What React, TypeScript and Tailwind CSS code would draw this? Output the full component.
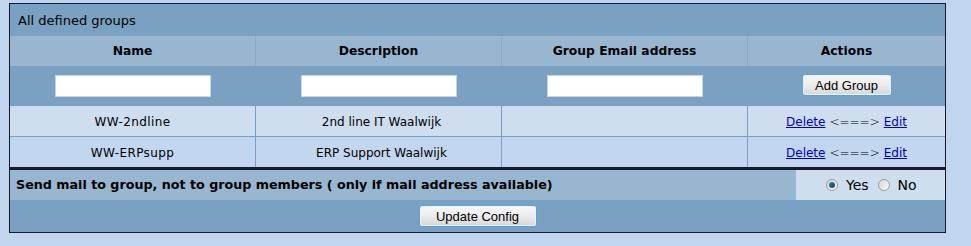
import React from "react";

const font = { fontFamily: '"DejaVu Sans", Verdana, sans-serif' };

function Btn({ label, w }: { label: string; w: string }) {
  return (
    <button
      className={`${w} h-[22px] rounded-[3px] border border-[#5fa0d8] bg-gradient-to-b from-[#f7f7f7] via-[#ececec] to-[#d6d6d6] text-[13px] text-black shadow-[inset_0_0_0_1px_#e8f3fc] leading-none`}
      style={{ fontFamily: '"Liberation Sans", Arial, sans-serif' }}
    >
      {label}
    </button>
  );
}

function Radio({ checked }: { checked?: boolean }) {
  return (
    <span className="inline-flex w-[12px] h-[12px] rounded-full border border-[#9a9a9a] bg-gradient-to-br from-[#d4d4d4] to-[#fbfbfb] items-center justify-center">
      {checked && (
        <span className="w-[6px] h-[6px] rounded-full bg-gradient-to-br from-[#3a86a8] to-[#0d3c55]" />
      )}
    </span>
  );
}

export default function App() {
  const rows = [
    { name: "WW-2ndline", desc: "2nd line IT Waalwijk", bg: "bg-[#cfdeee]" },
    { name: "WW-ERPsupp", desc: "ERP Support Waalwijk", bg: "bg-[#c3d6ef]" },
  ];
  const cols = "grid grid-cols-[245px_245px_245px_197px] gap-x-px";
  return (
    <div className="w-[971px] h-[246px] bg-[#c1d5ef] pt-[3px] pl-[9px] text-black text-[12px]" style={font}>
      <div className="w-[937px] border border-[#161a2c]">
        <div className="h-[32px] bg-[#7aa0c2] flex items-center pl-[8px] pt-[1px] text-[13px]">All defined groups</div>
        <div className={`${cols} h-[30px] bg-[#8aa9c6]`}>
          {["Name", "Description", "Group Email address", "Actions"].map((h) => (
            <div key={h} className="bg-[#98b6d0] flex items-center justify-center font-bold text-[12.3px]">
              {h}
            </div>
          ))}
        </div>
        <div className={`${cols} h-[39px] bg-[#7aa0c2]`}>
          {[0, 1, 2].map((i) => (
            <div key={i} className="flex items-center justify-center">
              <input className="w-[156px] h-[22px] bg-white border border-[#c7d4e2] outline-none" />
            </div>
          ))}
          <div className="flex items-center justify-center pb-[1px]">
            <Btn label="Add Group" w="w-[90px]" />
          </div>
        </div>
        {rows.map((r) => (
          <div key={r.name} className={`${cols} h-[31px] bg-[#7b9fc2] border-t border-[#7b9fc2]`}>
            <div className={`${r.bg} flex items-center justify-center pt-[1px] tracking-[0.4px]`}>{r.name}</div>
            <div className={`${r.bg} flex items-center justify-center pt-[1px] pl-[6px]`}>{r.desc}</div>
            <div className={`${r.bg}`} />
            <div className={`${r.bg} flex items-center justify-center gap-[4px] pt-[1px]`}>
              <a href="#" className="text-[#0000cc] underline">Delete</a>
              <span className="font-light">&lt;===&gt;</span>
              <a href="#" className="text-[#0000cc] underline">Edit</a>
            </div>
          </div>
        ))}
      </div>
      <div className="w-[937px] border border-[#161a2c] border-t-2">
        <div className="flex h-[30px]">
          <div className="w-[786px] bg-[#98b6d0] flex items-center pl-[6px] font-bold text-[12.7px]">
            Send mail to group, not to group members ( only if mail address available)
          </div>
          <div className="flex-1 bg-[#cfdeee] flex items-center pl-[30px] text-[14px]">
            <Radio checked />
            <span className="ml-[8px]">Yes</span>
            <span className="ml-[9px] inline-flex"><Radio /></span>
            <span className="ml-[8px]">No</span>
          </div>
        </div>
        <div className="h-[32px] bg-[#7aa0c2] flex items-center justify-center">
          <Btn label="Update Config" w="w-[118px]" />
        </div>
      </div>
    </div>
  );
}
